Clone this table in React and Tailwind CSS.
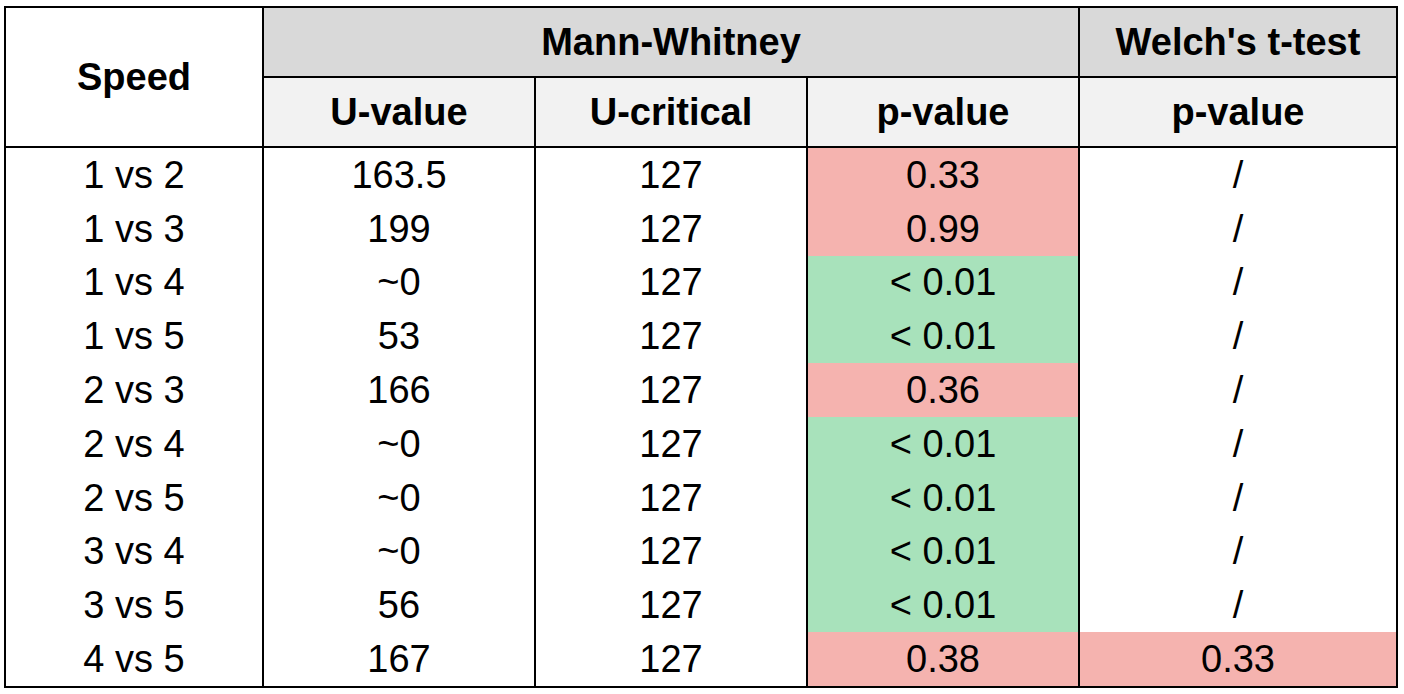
import React from 'react';

const rows = [
  { pair: '1 vs 2', u: '163.5', p: '0.33', sig: false },
  { pair: '1 vs 3', u: '199', p: '0.99', sig: false },
  { pair: '1 vs 4', u: '~0', p: '< 0.01', sig: true },
  { pair: '1 vs 5', u: '53', p: '< 0.01', sig: true },
  { pair: '2 vs 3', u: '166', p: '0.36', sig: false },
  { pair: '2 vs 4', u: '~0', p: '< 0.01', sig: true },
  { pair: '2 vs 5', u: '~0', p: '< 0.01', sig: true },
  { pair: '3 vs 4', u: '~0', p: '< 0.01', sig: true },
  { pair: '3 vs 5', u: '56', p: '< 0.01', sig: true },
  { pair: '4 vs 5', u: '167', p: '0.38', sig: false, welch: '0.33' },
];

const cols = 'grid grid-cols-[256px_270px_270px_270px_316px] gap-x-[2px] bg-black';

export default function App() {
  return (
    <div className="min-h-screen bg-white pt-[6px] pl-[4px] text-black" style={{ fontFamily: '"Liberation Sans", Arial, sans-serif' }}>
      <div className="w-[1394px] border-2 border-black">
        {/* header */}
        <div className={`${cols} grid-rows-[68px_68px] gap-y-[2px] border-b-2 border-black font-bold text-[38px]`}>
          <div className="row-span-2 bg-white flex items-center justify-center">Speed</div>
          <div className="col-span-3 bg-[#d9d9d9] flex items-center justify-center">Mann-Whitney</div>
          <div className="bg-[#d9d9d9] flex items-center justify-center">Welch's t-test</div>
          <div className="bg-[#f2f2f2] flex items-center justify-center">U-value</div>
          <div className="bg-[#f2f2f2] flex items-center justify-center">U-critical</div>
          <div className="bg-[#f2f2f2] flex items-center justify-center">p-value</div>
          <div className="bg-[#f2f2f2] flex items-center justify-center">p-value</div>
        </div>

        {/* data */}
        <div className={`${cols} h-[538px] grid-rows-[repeat(10,1fr)] text-[38px] leading-none`}>
          {rows.map((r) => (
            <React.Fragment key={r.pair}>
              <div className="bg-white flex items-center justify-center">{r.pair}</div>
              <div className="bg-white flex items-center justify-center">{r.u}</div>
              <div className="bg-white flex items-center justify-center">127</div>
              <div className={`${r.sig ? 'bg-[#a8e2bb]' : 'bg-[#f5b3af]'} flex items-center justify-center`}>{r.p}</div>
              <div className={`${r.welch ? 'bg-[#f5b3af]' : 'bg-white'} flex items-center justify-center`}>{r.welch || '/'}</div>
            </React.Fragment>
          ))}
        </div>
      </div>
    </div>
  );
}
